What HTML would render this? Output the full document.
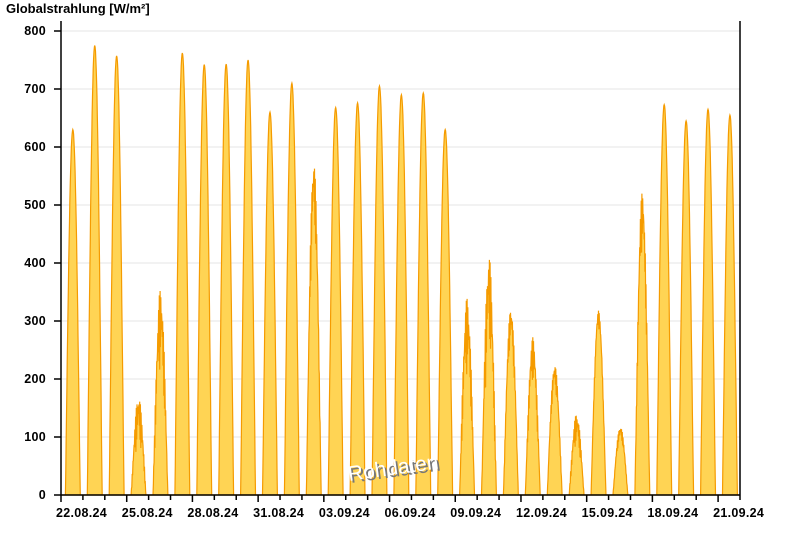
<!DOCTYPE html>
<html><head><meta charset="utf-8"><style>
body{margin:0;background:#fff;width:800px;height:550px;overflow:hidden;font-family:"Liberation Sans",Arial,sans-serif}
</style></head><body>
<svg id="s" width="800" height="550" xmlns="http://www.w3.org/2000/svg" style="position:absolute;left:0;top:0">
<text x="6" y="13" font-size="13" font-weight="bold" fill="#000">Globalstrahlung [W/m²]</text>
<g id="grid"></g>
<path id="area" fill="#ffd454" stroke="#f59b00" stroke-width="1.2" stroke-linejoin="miter"/>
<g id="axes" stroke="#000" stroke-width="1.5" fill="none"></g>
<g id="lbl" font-size="12.5" font-weight="bold" fill="#000" letter-spacing="0.3"></g>
<text x="0" y="0" font-size="21" fill="#777" transform="translate(351,483) rotate(-8)">Rohdaten</text>
<text x="0" y="0" font-size="21" fill="#fff" transform="translate(349,481) rotate(-8)">Rohdaten</text>
</svg>
<script>
var L=61,R=740,B=495,T=31,W=(R-L)/31;
function Y(v){return B-(v/800)*(B-T);}
var NS="http://www.w3.org/2000/svg";
function el(t,a,p,txt){var e=document.createElementNS(NS,t);for(var k in a)e.setAttribute(k,a[k]);if(txt)e.textContent=txt;document.getElementById(p).appendChild(e);}
for(var v=100;v<=800;v+=100){el('line',{x1:L,x2:R,y1:Y(v),y2:Y(v),stroke:'#e6e6e6','stroke-width':1},'grid');}
for(var v=0;v<=800;v+=100){el('text',{x:46,y:Y(v)+4,'text-anchor':'end'},'lbl',''+v);el('line',{x1:L-7,x2:L,y1:Y(v),y2:Y(v)},'axes');}
el('line',{x1:L,x2:L,y1:21,y2:B},'axes');el('line',{x1:R,x2:R,y1:21,y2:B},'axes');
el('line',{x1:L,x2:R,y1:B,y2:B},'axes');
var labels=['22.08.24','25.08.24','28.08.24','31.08.24','03.09.24','06.09.24','09.09.24','12.09.24','15.09.24','18.09.24','21.09.24'];
for(var d=0;d<=31;d++){var x=L+d*W;el('line',{x1:x,x2:x,y1:B,y2:B+(d%3==0?7:5)},'axes');}
for(var i=0;i<labels.length;i++){var x=L+i*3*W;el('text',{x:x-5,y:B+22},'lbl',labels[i]);}
var pk=[630,775,757,170,355,762,742,743,750,660,710,575,668,676,705,690,693,630,340,413,322,272,225,140,318,118,523,673,645,665,655];
var cloudy={3:[0.5,130],4:[0.6,280],11:[0.8,500],18:[0.6,300],19:[0.6,300],20:[0.8,300],21:[0.7,230],22:[0.8,210],23:[0.6,110],24:[0.9,300],25:[0.8,100],26:[0.8,480]};
var p='M'+L+' '+B;
for(var d=0;d<31;d++){
 var s=0.2,e=0.88,n=40;
 for(var k=0;k<=n;k++){
  var u=k/n,x=L+(d+s+(e-s)*u)*W;
  var v=Math.pow(Math.sin(Math.PI*u),1.05)*pk[d];
  if(cloudy[d]){var f=cloudy[d][0];v=v*(f+(1-f)*Math.abs(Math.sin(k*1.7+d)));}
  p+=' L'+x.toFixed(1)+' '+Y(v).toFixed(1);
 }
}
p+=' L'+R+' '+B+' Z';
document.getElementById('area').setAttribute('d',p);
</script>
</body></html>
